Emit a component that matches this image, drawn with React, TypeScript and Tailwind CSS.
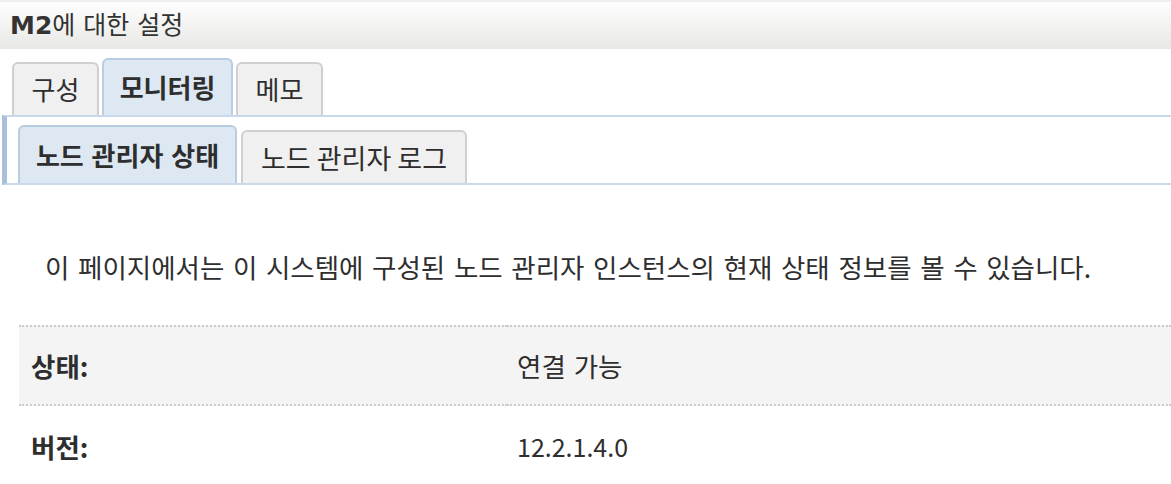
import React from "react";

export default function App() {
  return (
    <div className="w-[1171px] h-[484px] overflow-hidden bg-white text-[#2e2e2e] font-['Noto_Sans_CJK_KR',sans-serif]">
      {/* Header */}
      <div className="h-[49px] border-t-2 border-[#efefef] bg-gradient-to-b from-[#fefefe] via-[#f3f3f2] to-[#e7e8e6] flex items-center pl-[10px] text-[25px] text-[#333] font-['DejaVu_Sans','Noto_Sans_CJK_KR',sans-serif]">
        <span className="font-bold">M2</span>
        <span>에 대한 설정</span>
      </div>

      {/* Top tabs */}
      <div className="flex items-end pl-[12px] gap-[3px] mt-[9px]">
        <div className="w-[87px] h-[53px] rounded-t-[6px] border-2 border-b-0 border-[#cfcfcf] bg-[#f0f0f0] flex items-center justify-center text-[26px] leading-none pb-[2px]">
          구성
        </div>
        <div className="w-[131px] h-[57px] rounded-t-[6px] border-2 border-b-0 border-[#b8cde2] bg-[#dde8f2] flex items-center justify-center text-[26px] font-bold leading-none pb-[2px]">
          모니터링
        </div>
        <div className="w-[87px] h-[53px] rounded-t-[6px] border-2 border-b-0 border-[#cfcfcf] bg-[#f0f0f0] flex items-center justify-center text-[26px] leading-none pb-[2px]">
          메모
        </div>
      </div>

      {/* Sub panel */}
      <div className="ml-[2px] border-l-[5px] border-l-[#a9c0da] border-t-2 border-b-2 border-t-[#c9d8ea] border-b-[#c9d8ea] pt-[8px] pl-[11px] flex items-end gap-[4px]">
        <div className="w-[219px] h-[58px] rounded-t-[6px] border-2 border-b-0 border-[#b8cde2] bg-[#dde8f2] flex items-center justify-center text-[26px] font-bold leading-none [word-spacing:2px]">
          노드 관리자 상태
        </div>
        <div className="w-[226px] h-[53px] rounded-t-[6px] border-2 border-b-0 border-[#cfcfcf] bg-[#f0f0f0] flex items-center justify-center text-[27px] leading-none">
          노드 관리자 로그
        </div>
      </div>

      {/* Description */}
      <div className="pl-[45px] mt-[66px] text-[26.5px] leading-[32px] whitespace-nowrap [word-spacing:2.7px]">
        이 페이지에서는 이 시스템에 구성된 노드 관리자 인스턴스의 현재 상태 정보를 볼 수 있습니다.
      </div>

      {/* Table */}
      <div className="ml-[19px] mt-[42px] grid grid-cols-[488px_1fr] text-[26.5px]">
        <div className="h-[81px] bg-[#f4f4f4] border-t-2 border-b-2 border-dotted border-[#cccccc] flex items-center pl-[12px] font-bold">
          상태:
        </div>
        <div className="h-[81px] bg-[#f4f4f4] border-t-2 border-b-2 border-dotted border-[#cccccc] flex items-center pl-[10px] [word-spacing:2px]">
          연결 가능
        </div>
        <div className="h-[81px] flex items-center pl-[12px] font-bold">버전:</div>
        <div className="h-[81px] flex items-center pl-[10px] text-[25px]">12.2.1.4.0</div>
      </div>
    </div>
  );
}
